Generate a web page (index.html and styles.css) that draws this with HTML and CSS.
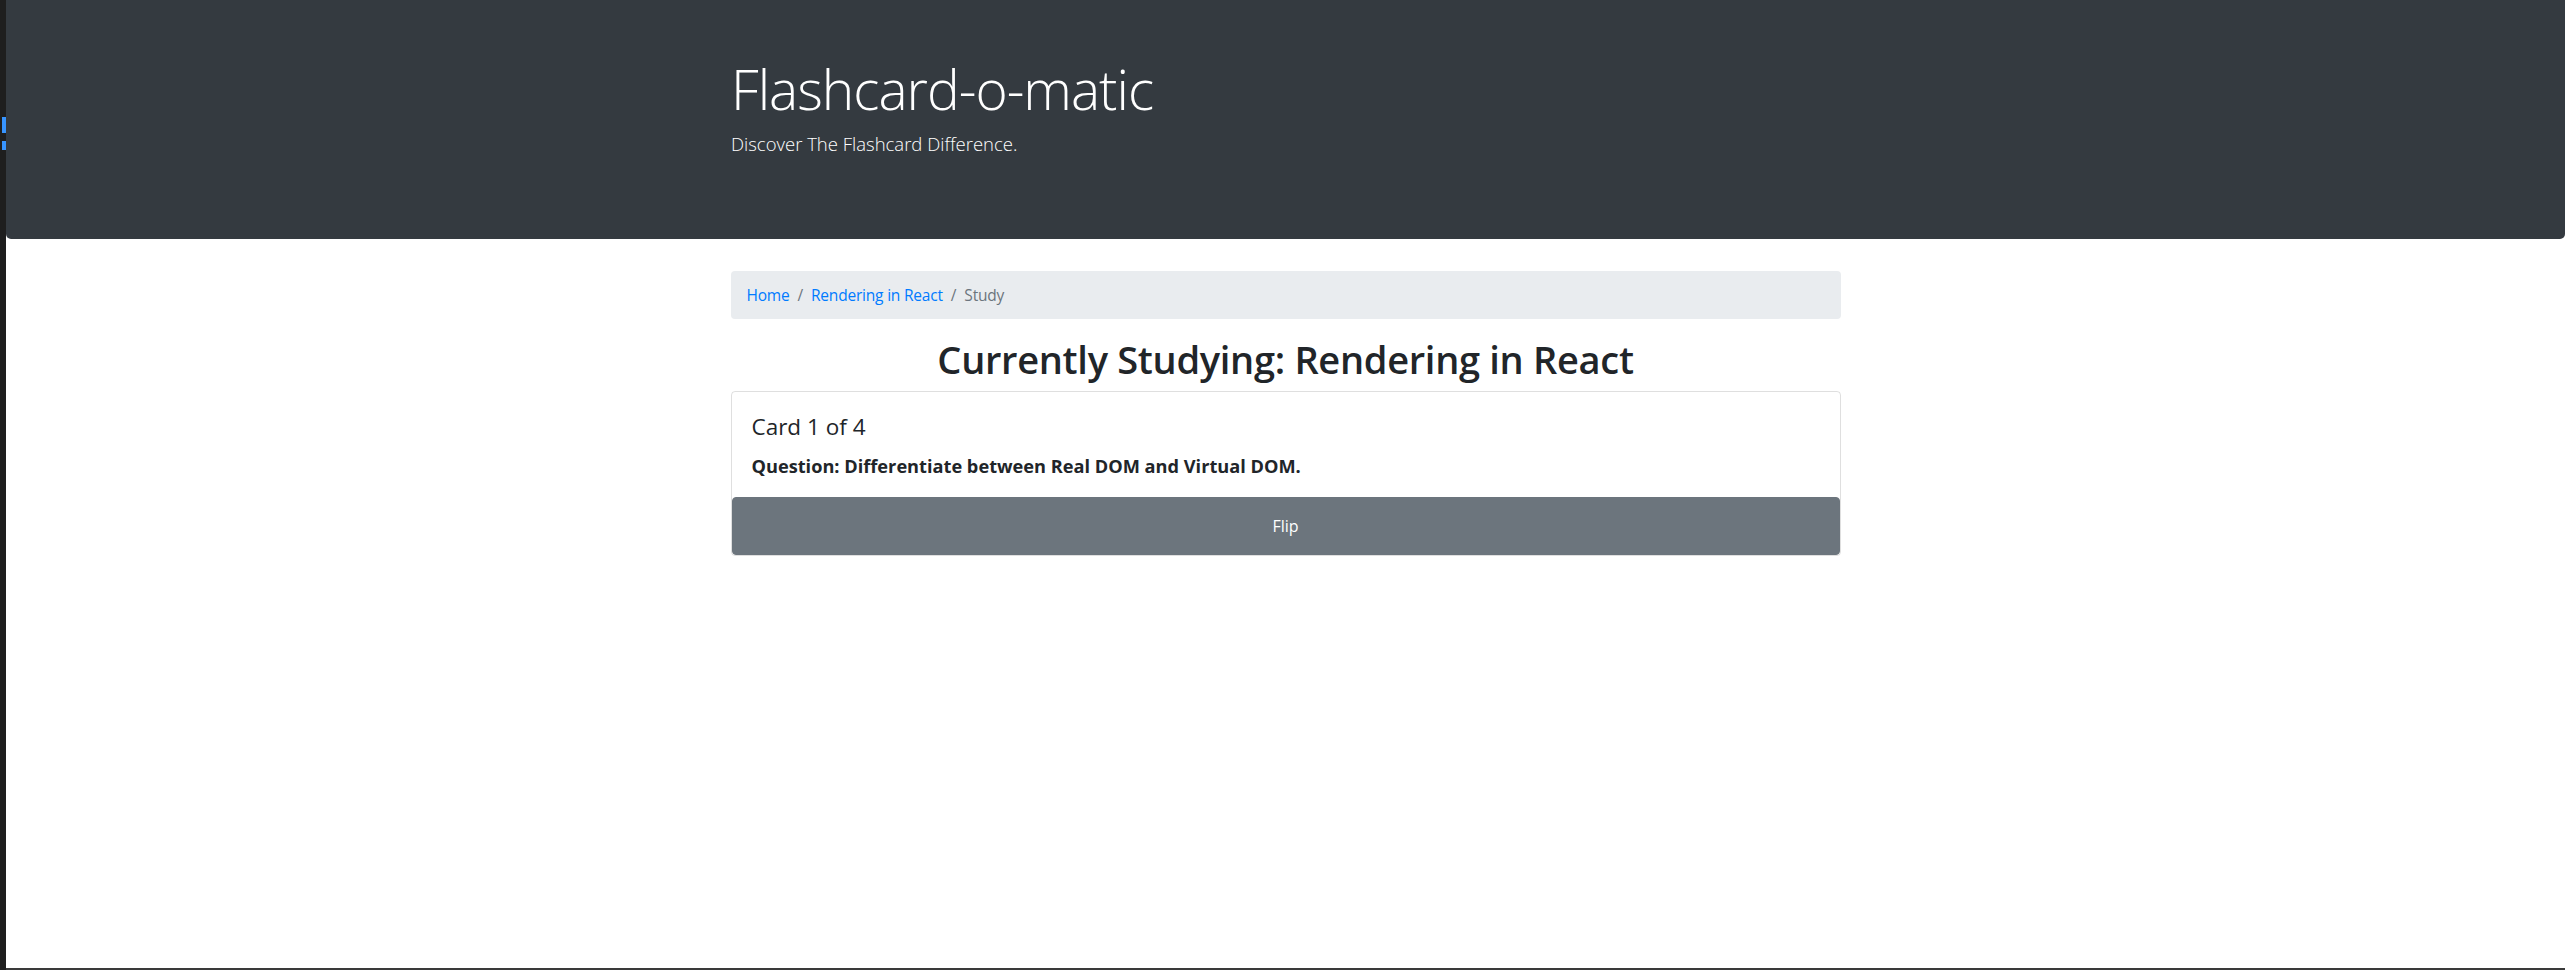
FILE: index.html
```html
<!DOCTYPE html>
<html lang="en">
<head>
<meta charset="utf-8">
<title>Flashcard-o-matic</title>
<link rel="stylesheet" href="styles.css">
</head>
<body>
  <div class="strip">
    <span class="mark mark-a"></span>
    <span class="mark mark-b"></span>
  </div>
  <div class="page">
    <header class="jumbotron">
      <div class="container">
        <h1 class="display">Flashcard-o-matic</h1>
        <p class="lead">Discover The Flashcard Difference.</p>
      </div>
    </header>
    <main class="container">
      <nav class="breadcrumb">
        <a href="#" class="crumb-link">Home</a>
        <span class="sep">/</span>
        <a href="#" class="crumb-link">Rendering in React</a>
        <span class="sep">/</span>
        <span class="crumb-active">Study</span>
      </nav>
      <h1 class="study-title">Currently Studying: Rendering in React</h1>
      <div class="card">
        <div class="card-body">
          <h5 class="card-title">Card 1 of 4</h5>
          <p class="card-text">Question: Differentiate between Real DOM and Virtual DOM.</p>
        </div>
        <button class="btn-flip" type="button">Flip</button>
      </div>
    </main>
  </div>
</body>
</html>
```
FILE: styles.css
```css
* { box-sizing: border-box; }
html, body { margin: 0; padding: 0; }
body {
  display: flex;
  height: 970px;
  overflow: hidden;
  background: #1e1e1e;
  font-family: "Open Sans", "Noto Sans", sans-serif;
  color: #212529;
}
.strip {
  width: 6px;
  flex: none;
  background: #1e1e1e;
  display: flex;
  flex-direction: column;
  align-items: flex-end;
}
.mark { display: block; width: 4px; background: #3794ff; }
.mark-a { margin-top: 117px; height: 16px; }
.mark-b { margin-top: 8px; height: 9px; }
.page {
  flex: 1;
  background: #fff;
  border-bottom: 2px solid #3a3a3a;
}
.jumbotron {
  background: #343a40;
  color: #fff;
  padding: 55px 0 82px 1px;
  border-radius: 0 0 5px 5px;
  margin-bottom: 32px;
}
.container {
  width: 1110px;
  margin: 0 auto;
}
.main-wrap {
  padding-left: 1px;
}
.display {
  margin: 0 0 9px;
  font-size: 55px;
  font-weight: 300;
  line-height: 67px;
  letter-spacing: -1px;
}
.lead {
  margin: 0;
  font-size: 18.5px;
  font-weight: 300;
  line-height: 26px;
}
.breadcrumb {
  display: flex;
  background: #e9ecef;
  border-radius: 4px;
  padding: 12px 16px;
  margin-bottom: 16px;
  font-size: 15.5px;
  line-height: 24px;
  letter-spacing: -0.2px;
}
.crumb-link { color: #007bff; text-decoration: none; }
.sep { color: #6c757d; padding: 0 8px; }
.crumb-active { color: #6c757d; }
.study-title {
  margin: 0 0 8px;
  text-align: center;
  font-size: 38px;
  font-weight: 600;
  line-height: 48px;
  letter-spacing: -0.3px;
}
.card {
  border: 1px solid rgba(0,0,0,.125);
  border-radius: 4px;
  display: flex;
  flex-direction: column;
}
.card-body { padding: 20px 20px 19px; }
.card-title {
  margin: 0 0 12px;
  font-size: 22.5px;
  font-weight: 500;
  line-height: 30px;
}
.card-text {
  margin: 0;
  font-size: 18.2px;
  font-weight: 700;
  line-height: 24px;
}
.btn-flip {
  display: block;
  width: 100%;
  background: #6c757d;
  border: 1px solid #6c757d;
  border-radius: 4px;
  color: #fff;
  font-family: inherit;
  font-size: 16px;
  line-height: 24px;
  padding: 16px;
  margin: 0;
}
```
